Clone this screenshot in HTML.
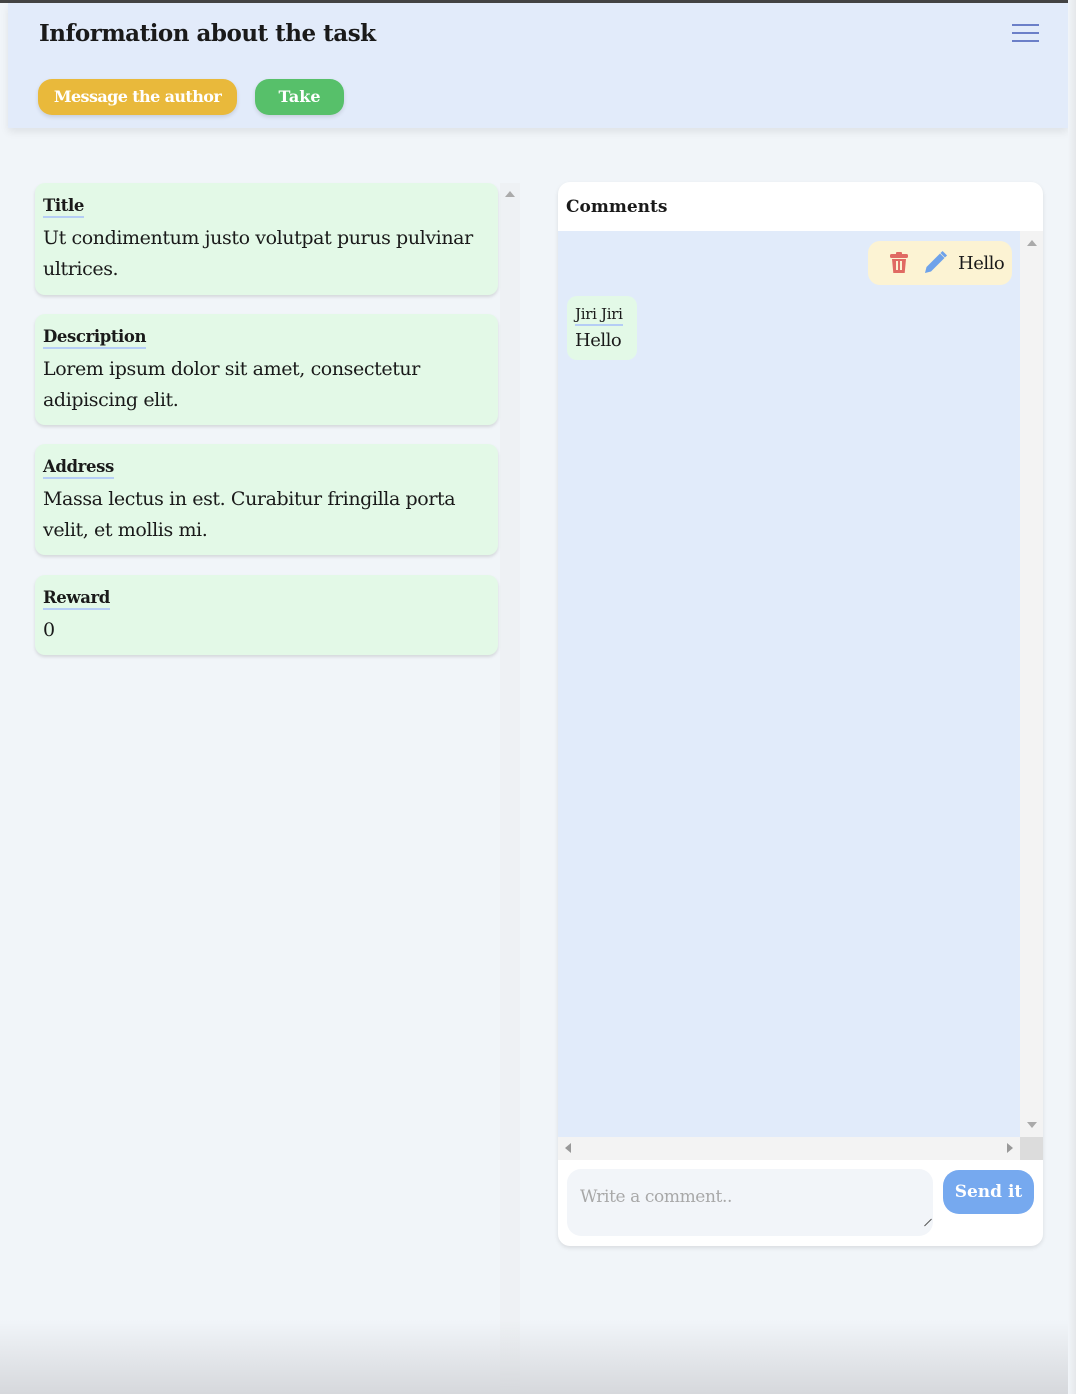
<!DOCTYPE html>
<html><head><style>
*{margin:0;padding:0;box-sizing:border-box}
body{width:1076px;height:1394px;background:#f1f5f9;position:relative;overflow:hidden;font-family:"DejaVu Serif","Liberation Serif",serif;color:#1a1a1a}
.abs{position:absolute}
.hdr{left:8px;top:3px;width:1060px;height:125px;background:#e2ebfa;box-shadow:0 4px 8px rgba(0,0,0,.08)}
.btn{position:absolute;border-radius:14px;color:#fff;font-weight:bold;font-size:16px;text-align:center;line-height:36px;box-shadow:0 2px 4px rgba(0,0,0,.12)}
.card{position:absolute;left:35px;width:463px;background:#e3f9e7;border-radius:10px;box-shadow:0 2px 3px rgba(0,0,0,.12);padding:13px 8px}
.card h4{font-size:16.5px;font-weight:bold;display:inline-block;border-bottom:2px solid #b5cdf5;line-height:20px;letter-spacing:-.4px}
.card p{font-size:19px;line-height:31px;margin-top:5px;letter-spacing:-.4px}
</style></head><body>
<div class="abs" style="left:0;top:0;width:1076px;height:3px;background:#444"></div>
<div class="abs hdr"></div>
<div class="abs" style="left:39px;top:20px;font-size:23px;font-weight:bold;letter-spacing:-.5px">Information about the task</div>
<div class="abs" style="left:1012px;top:24px;width:27px;height:2px;background:#6b7fc8"></div>
<div class="abs" style="left:1012px;top:32px;width:27px;height:2px;background:#6b7fc8"></div>
<div class="abs" style="left:1012px;top:40px;width:27px;height:2px;background:#6b7fc8"></div>
<div class="btn" style="left:38px;top:79px;width:199px;background:#e9b93b;letter-spacing:-.6px">Message the author</div>
<div class="btn" style="left:255px;top:79px;width:89px;background:#57c06a">Take</div>

<div class="abs" style="left:500px;top:183px;width:20px;height:1211px;background:#eef1f4"></div>
<div class="abs" style="left:505px;top:191px;border:5px solid transparent;border-bottom:6px solid #aaa;border-top:0"></div>

<div class="card" style="top:183px;height:112px"><h4>Title</h4><p>Ut condimentum justo volutpat purus pulvinar ultrices.</p></div>
<div class="card" style="top:314px;height:111px"><h4>Description</h4><p>Lorem ipsum dolor sit amet, consectetur adipiscing elit.</p></div>
<div class="card" style="top:444px;height:111px"><h4>Address</h4><p>Massa lectus in est. Curabitur fringilla porta velit, et mollis mi.</p></div>
<div class="card" style="top:575px;height:80px"><h4>Reward</h4><p>0</p></div>

<div class="abs" style="left:558px;top:182px;width:485px;height:1064px;background:#fff;border-radius:12px;box-shadow:0 2px 4px rgba(0,0,0,.1);overflow:hidden">
  <div class="abs" style="left:8px;top:15px;font-size:17px;font-weight:bold">Comments</div>
  <div class="abs" style="left:0;top:49px;width:462px;height:906px;background:#e1ebfa"></div>
  <div class="abs" style="left:462px;top:49px;width:23px;height:906px;background:#f3f3f3"></div>
  <div class="abs" style="left:469px;top:58px;border:5px solid transparent;border-bottom:6px solid #aaa;border-top:0"></div>
  <div class="abs" style="left:469px;top:940px;border:5px solid transparent;border-top:6px solid #aaa;border-bottom:0"></div>
  <div class="abs" style="left:0;top:955px;width:462px;height:23px;background:#f3f3f3"></div>
  <div class="abs" style="left:462px;top:955px;width:23px;height:23px;background:#dcdcdc"></div>
  <div class="abs" style="left:7px;top:961px;border:5px solid transparent;border-right:6px solid #999;border-left:0"></div>
  <div class="abs" style="left:449px;top:961px;border:5px solid transparent;border-left:6px solid #999;border-right:0"></div>

  <div class="abs" style="left:310px;top:59px;width:144px;height:44px;background:#fcf3d3;border-radius:12px"></div>
  <svg class="abs" style="left:331px;top:69px" width="20" height="24" viewBox="0 0 20 24"><rect x="7" y="1" width="6" height="3" rx="1" fill="#e06a63"/><rect x="1" y="3" width="18" height="4" rx="1.5" fill="#e06a63"/><path d="M3 8h14l-1.3 14H4.3z" fill="#e06a63"/><rect x="7" y="10" width="2" height="9" fill="#fcf3d3"/><rect x="11" y="10" width="2" height="9" fill="#fcf3d3"/></svg>
  <svg class="abs" style="left:364px;top:68px" width="26" height="26" viewBox="0 0 26 26"><path d="M3 23l1.5-6L18 3.5l4.5 4.5L9 21.5z" fill="#6ea2ea"/><path d="M19.5 2l4.5 4.5" stroke="#6ea2ea" stroke-width="3"/></svg>
  <div class="abs" style="left:400px;top:71px;font-size:18px;letter-spacing:-.5px">Hello</div>

  <div class="abs" style="left:9px;top:114px;width:70px;height:64px;background:#e3f9e7;border-radius:10px"></div>
  <div class="abs" style="left:17px;top:122px;font-size:15px;border-bottom:2px solid #b5cdf5;line-height:20px;letter-spacing:-.3px">Jiri Jiri</div>
  <div class="abs" style="left:17px;top:148px;font-size:18px;letter-spacing:-.5px">Hello</div>

  <div class="abs" style="left:9px;top:987px;width:366px;height:67px;background:#f2f5f9;border-radius:14px"></div>
  <div class="abs" style="left:22px;top:1005px;font-size:17px;color:#a8a8a8;letter-spacing:-.4px">Write a comment..</div>
  <div class="abs" style="left:365px;top:1040px;width:10px;height:1px;background:#555;transform:rotate(-45deg)"></div>
  <div class="btn" style="left:385px;top:988px;width:91px;height:44px;line-height:44px;background:#76a9ef;border-radius:16px;box-shadow:none;font-size:17px">Send it</div>
</div>

<div class="abs" style="left:0;top:1320px;width:1076px;height:74px;background:linear-gradient(#f1f5f900,#d6d8dc)"></div>
<div class="abs" style="left:1068px;top:0;width:8px;height:1394px;background:linear-gradient(90deg,#f1f5f9,#e5e7ea)"></div>
</body></html>
